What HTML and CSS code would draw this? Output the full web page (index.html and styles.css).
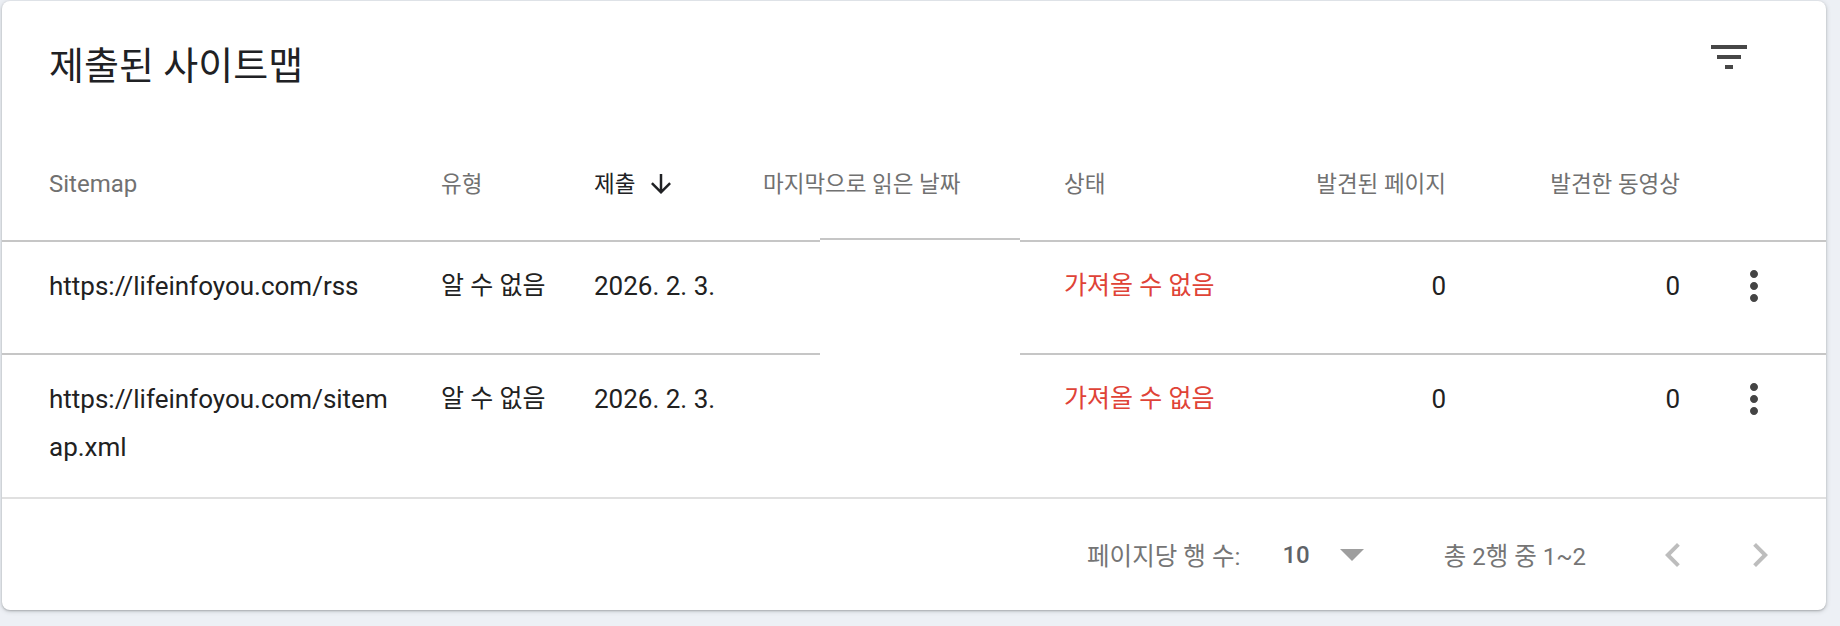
FILE: index.html
```html
<!DOCTYPE html>
<html lang="ko">
<head>
<meta charset="utf-8">
<title>제출된 사이트맵</title>
<link rel="stylesheet" href="styles.css">
</head>
<body>
<div class="page">
  <section class="card">
    <div class="toolbar">
      <h1 class="title">제출된 사이트맵</h1>
      <svg class="filter-icon" viewBox="0 0 24 24" aria-hidden="true"><path d="M10 18h4v-2h-4v2zM3 6v2h18V6H3zm3 7h12v-2H6v2z"/></svg>
    </div>

    <div class="row head">
      <div class="cell c-url h-lat">Sitemap</div>
      <div class="cell h-ko">유형</div>
      <div class="cell sorted"><span class="h-ko">제출</span><svg class="sort-icon" viewBox="0 0 24 24" aria-hidden="true"><path d="M20 12l-1.41-1.41L13 16.17V4h-2v12.17l-5.58-5.59L4 12l8 8 8-8z"/></svg></div>
      <div class="cell h-ko">마지막으로 읽은 날짜</div>
      <div class="cell h-ko">상태</div>
      <div class="cell num h-ko">발견된 페이지</div>
      <div class="cell num h-ko">발견한 동영상</div>
      <div class="cell"></div>
    </div>

    <div class="row body">
      <div class="cell c-url">https://lifeinfoyou.com/rss</div>
      <div class="cell b-ko">알 수 없음</div>
      <div class="cell">2026. 2. 3.</div>
      <div class="cell"></div>
      <div class="cell b-ko error">가져올 수 없음</div>
      <div class="cell num">0</div>
      <div class="cell num">0</div>
      <div class="cell menu-cell"><svg class="menu-icon" viewBox="0 0 24 24" aria-hidden="true"><path d="M12 8c1.1 0 2-.9 2-2s-.9-2-2-2-2 .9-2 2 .9 2 2 2zm0 2c-1.1 0-2 .9-2 2s.9 2 2 2 2-.9 2-2-.9-2-2-2zm0 6c-1.1 0-2 .9-2 2s.9 2 2 2 2-.9 2-2-.9-2-2-2z"/></svg></div>
    </div>

    <div class="row body last">
      <div class="cell c-url">https://lifeinfoyou.com/sitemap.xml</div>
      <div class="cell b-ko">알 수 없음</div>
      <div class="cell">2026. 2. 3.</div>
      <div class="cell"></div>
      <div class="cell b-ko error">가져올 수 없음</div>
      <div class="cell num">0</div>
      <div class="cell num">0</div>
      <div class="cell menu-cell"><svg class="menu-icon" viewBox="0 0 24 24" aria-hidden="true"><path d="M12 8c1.1 0 2-.9 2-2s-.9-2-2-2-2 .9-2 2 .9 2 2 2zm0 2c-1.1 0-2 .9-2 2s.9 2 2 2 2-.9 2-2-.9-2-2-2zm0 6c-1.1 0-2 .9-2 2s.9 2 2 2 2-.9 2-2-.9-2-2-2z"/></svg></div>
    </div>

    <div class="footer">
      <span class="f-ko">페이지당 행 수:</span>
      <span class="per-page">10</span>
      <svg class="drop-icon" viewBox="0 0 24 12" aria-hidden="true"><path d="M0 0h24L12 12z"/></svg>
      <span class="range"><span class="f-ko">총</span> 2<span class="f-ko">행</span> <span class="f-ko">중</span> 1~2</span>
      <svg class="chev chev-left" viewBox="0 0 24 24" aria-hidden="true"><path d="M15.41 7.41L14 6l-6 6 6 6 1.41-1.41L10.83 12z"/></svg>
      <svg class="chev chev-right" viewBox="0 0 24 24" aria-hidden="true"><path d="M10 6L8.59 7.41 13.17 12l-4.58 4.59L10 18l6-6z"/></svg>
    </div>
  </section>
</div>
</body>
</html>
```

FILE: styles.css
```css
html, body {
  margin: 0;
  padding: 0;
}

body {
  width: 1840px;
  height: 626px;
  overflow: hidden;
  background: #edf0f5;
  font-family: Roboto, "Noto Sans CJK KR", sans-serif;
  color: #212121;
}

.page {
  padding: 1px 14px 0 2px;
}

.card {
  height: 609px;
  box-sizing: border-box;
  background: #fff;
  border-radius: 8px;
  box-shadow: 0 1px 2px 0 rgba(60, 64, 67, 0.3), 0 1px 4px 1px rgba(60, 64, 67, 0.15);
  display: flex;
  flex-direction: column;
  overflow: hidden;
}

/* ---------- top bar ---------- */
.toolbar {
  display: flex;
  justify-content: space-between;
  align-items: flex-start;
  height: 48px;
  padding: 32px 73px 0 47px;
}

.title {
  margin: 13px 0 0;
  font-size: 38px;
  font-weight: 400;
  line-height: 40px;
  color: #202124;
}

.filter-icon {
  width: 48px;
  height: 48px;
  flex: none;
  fill: #474747;
}

/* ---------- table rows ---------- */
.row {
  display: grid;
  grid-template-columns: 392px 153px 169px 301px 186px 196px 234px 146px;
  padding-left: 47px;
  box-sizing: border-box;
}

.cell {
  line-height: 48px;
  font-size: 26px;
  white-space: nowrap;
}

.c-url {
  padding-right: 49px;
  white-space: normal;
  word-break: break-all;
}

.num {
  text-align: right;
}

.head {
  padding-top: 79px;
  padding-bottom: 34px;
  color: #717171;
  background:
    linear-gradient(to right, #c6c6c6 818px, transparent 818px, transparent 1018px, #c6c6c6 1018px) left bottom / 100% 2px no-repeat,
    linear-gradient(#c6c6c6, #c6c6c6) 818px calc(100% - 2px) / 200px 2px no-repeat;
}

.h-lat {
  font-size: 24px;
}

.h-ko {
  font-size: 22.5px;
}

.sorted {
  display: flex;
  align-items: center;
  color: #202124;
}

.sort-icon {
  width: 30px;
  height: 30px;
  margin-left: 11px;
  fill: #202124;
}

.body {
  min-height: 113px;
  padding-top: 20px;
  padding-bottom: 28px;
  background: linear-gradient(to right, #c6c6c6 818px, transparent 818px, transparent 1018px, #c6c6c6 1018px) left bottom / 100% 2px no-repeat;
}

.body.last {
  min-height: 0;
  padding-bottom: 26px;
  background: none;
}

.b-ko {
  font-size: 25px;
}

.error {
  color: #df4337;
}

.menu-cell {
  padding-left: 50px;
}

.menu-icon {
  display: block;
  width: 48px;
  height: 48px;
  fill: #444;
}

/* ---------- footer ---------- */
.footer {
  flex: 1;
  border-top: 2px solid #e0e0e0;
  display: flex;
  align-items: center;
  justify-content: flex-end;
  padding-right: 42px;
  font-size: 24px;
  color: #757575;
}

.f-ko {
  font-size: 24.5px;
}

.per-page {
  margin-left: 42px;
  color: #5f6368;
  font-weight: 500;
}

.drop-icon {
  width: 24px;
  height: 12px;
  margin-left: 30px;
  fill: #9e9e9e;
}

.range {
  margin-left: 80px;
}

.chev {
  width: 48px;
  height: 48px;
  fill: #bdbdbd;
  flex: none;
}

.chev-left {
  margin-left: 63px;
}

.chev-right {
  margin-left: 39px;
}
```
